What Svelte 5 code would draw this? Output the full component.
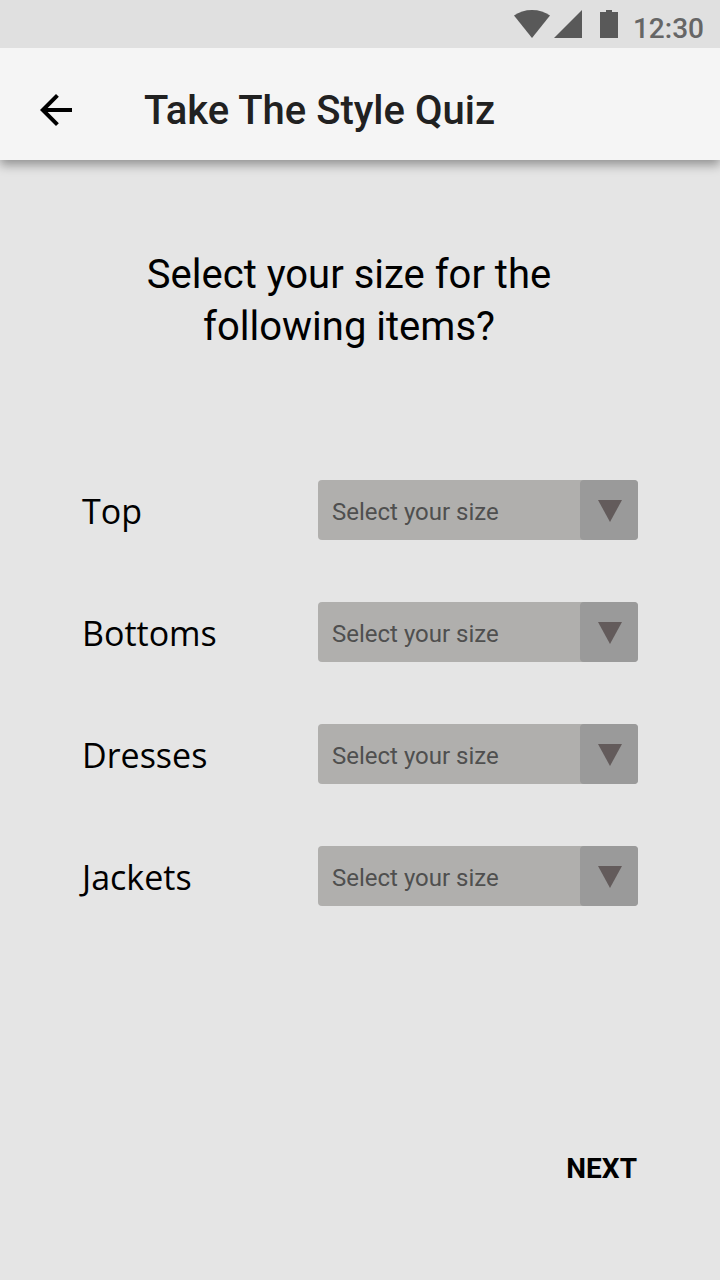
<script>
  const items = ['Top', 'Bottoms', 'Dresses', 'Jackets'];
  const sizes = ['XS', 'S', 'M', 'L', 'XL'];
</script>

<div class="screen">
  <div class="status">
    <svg class="wifi" width="36" height="28" viewBox="0 0 36 28" aria-hidden="true">
      <path d="M0 5.6C5 2 11 0 18 0s13 2 18 5.6L18 28z" />
    </svg>
    <svg class="signal" width="28" height="28" viewBox="0 0 28 28" aria-hidden="true">
      <path d="M0 28 28 0v28z" />
    </svg>
    <svg class="battery" width="18" height="28" viewBox="0 0 18 28" aria-hidden="true">
      <path d="M6 0h6v2h6v26H0V2h6z" />
    </svg>
    <span class="time">12:30</span>
  </div>

  <header>
    <button class="back" type="button" aria-label="Back">
      <svg width="48" height="48" viewBox="0 0 24 24" aria-hidden="true">
        <path d="M20 11H7.83l5.59-5.59L12 4l-8 8 8 8 1.41-1.41L7.83 13H20z" />
      </svg>
    </button>
    <h1>Take The Style Quiz</h1>
  </header>

  <main>
    <h2>Select your size for the following items?</h2>
    <form>
      {#each items as item}
        <div class="row">
          <label for={item}>{item}</label>
          <div class="picker">
            <select id={item}>
              <option value="">Select your size</option>
              {#each sizes as size}
                <option>{size}</option>
              {/each}
            </select>
            <span class="toggle" aria-hidden="true">
              <svg width="24" height="22" viewBox="0 0 24 22"><path d="M0 0h24L12 22z" /></svg>
            </span>
          </div>
        </div>
      {/each}
    </form>
    <button class="next" type="button">NEXT</button>
  </main>
</div>

<style>
  :global(body) {
    margin: 0;
    background: #e5e5e5;
  }
  .screen {
    display: flex;
    flex-direction: column;
    min-height: 100vh;
    background: #e5e5e5;
    color: #000;
    font-family: Roboto, sans-serif;
  }
  button {
    padding: 0;
    border: 0;
    background: none;
    color: inherit;
    font-family: inherit;
    cursor: pointer;
  }
  svg {
    display: block;
  }
  .status {
    position: relative;
    z-index: 1;
    display: flex;
    justify-content: flex-end;
    align-items: center;
    box-sizing: border-box;
    height: 48px;
    padding: 0 16px;
    background: #e0e0e0;
    color: #666;
    fill: #595959;
  }
  .signal {
    margin: 0 18px 0 4px;
  }
  .time {
    margin-left: 15px;
    padding-top: 10px;
    font-size: 28px;
    font-weight: 500;
    line-height: 32px;
  }
  header {
    display: flex;
    align-items: center;
    gap: 64px;
    box-sizing: border-box;
    height: 112px;
    padding: 12px 32px 0;
    background: #f5f5f5;
    box-shadow: 0 5px 10px rgba(0, 0, 0, 0.36);
  }
  h1 {
    margin: 0;
    padding-top: 2px;
    color: #212121;
    font-size: 40px;
    font-weight: 500;
    line-height: 48px;
  }
  main {
    display: flex;
    flex: 1;
    flex-direction: column;
    padding: 89px 82px 87px;
  }
  h2 {
    margin: 0 22px 127px 0;
    padding: 0 60px;
    font-size: 40px;
    font-weight: 400;
    line-height: 52px;
    text-align: center;
  }
  form {
    display: flex;
    flex-direction: column;
    gap: 62px;
  }
  .row {
    display: flex;
    align-items: center;
    justify-content: space-between;
  }
  label {
    padding-top: 2px;
    font-family: "Open Sans", sans-serif;
    font-size: 34px;
    line-height: 48px;
  }
  .picker {
    display: grid;
    grid-template-columns: 1fr 58px;
    width: 320px;
    height: 60px;
    border-radius: 4px;
    background: #b0afad;
  }
  select {
    grid-area: 1 / 1 / 2 / 3;
    width: 100%;
    padding: 4px 58px 0 14px;
    border: 0;
    border-radius: 4px;
    background: none;
    color: #4f4f4f;
    font-family: inherit;
    font-size: 24px;
    appearance: none;
  }
  .toggle {
    display: grid;
    grid-area: 1 / 2 / 2 / 3;
    place-items: center;
    padding: 2px 0 0 2px;
    border-radius: 4px;
    background: #9a9a9a;
    fill: #635b5b;
    pointer-events: none;
  }
  .next {
    align-self: flex-end;
    margin-top: auto;
    margin-right: 1px;
    font-size: 28px;
    font-weight: 700;
    line-height: 48px;
  }
</style>
